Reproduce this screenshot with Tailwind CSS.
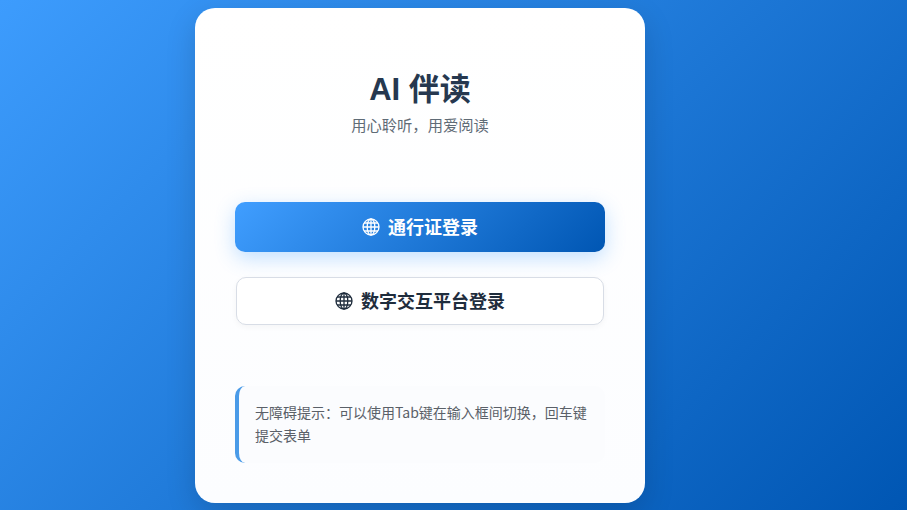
<!DOCTYPE html>
<html lang="zh-CN">
<head>
  <meta charset="UTF-8">
  <script src="https://cdn.jsdelivr.net/npm/@tailwindcss/browser@4"></script>
  <title>AI 伴读</title>
</head>
<body class="h-[510px] overflow-hidden flex items-center justify-center pr-[67px] bg-linear-[135deg,#3d9cfd,#0056b3] font-['Liberation_Sans','Noto_Sans_CJK_SC',sans-serif]">
  <main class="w-[450px] h-[495px] bg-linear-to-b from-white to-[#fcfdff] rounded-[20px] px-10 pt-[61px] shadow-[0_10px_30px_rgba(0,0,0,0.15)]">
    <!-- header -->
    <div class="text-center">
      <h1 class="text-[31px] leading-[42px] font-bold text-[#26384f]">AI 伴读</h1>
      <p class="mt-[4px] text-[15.3px] leading-[22px] text-[#5f6b76]">用心聆听&#xFF0C;用爱阅读</p>
    </div>

    <!-- login buttons -->
    <div class="mt-[65px] flex flex-col gap-[25px]">
      <button type="button" class="h-[50px] flex items-center justify-center gap-2 rounded-[10px] bg-linear-[135deg,#409eff,#0056b3] text-white text-[18px] font-bold shadow-[0_6px_20px_rgba(64,158,255,0.32)]">
        <svg class="w-[18px] h-[18px]" viewBox="0 0 18 18" fill="none" stroke="currentColor" stroke-width="1.3">
          <circle cx="9" cy="9" r="8"/>
          <ellipse cx="9" cy="9" rx="3.8" ry="8"/>
          <path d="M9 1v16M1 9h16M2 5h14M2 13h14"/>
        </svg>
        <span class="pt-1">通行证登录</span>
      </button>
      <button type="button" class="h-[48px] mx-px flex items-center justify-center gap-2 rounded-[10px] bg-white border border-[#d8dde6] text-[#1f2d3d] text-[18px] font-bold shadow-[0_2px_6px_rgba(0,0,0,0.04)]">
        <svg class="w-[18px] h-[18px]" viewBox="0 0 18 18" fill="none" stroke="currentColor" stroke-width="1.3">
          <circle cx="9" cy="9" r="8"/>
          <ellipse cx="9" cy="9" rx="3.8" ry="8"/>
          <path d="M9 1v16M1 9h16M2 5h14M2 13h14"/>
        </svg>
        <span class="pt-1">数字交互平台登录</span>
      </button>
    </div>

    <!-- accessibility tip -->
    <div class="mt-[61px] h-[77px] pl-4 pr-4 py-[15px] rounded-[10px] border-l-[4px] border-[#4a9be8] bg-[#fbfcfe] font-['Noto_Sans_CJK_SC',sans-serif] text-[14px] leading-[23px] text-[#5a6068]">
      无障碍提示&#xFF1A;可以使用Tab键在输入框间切换&#xFF0C;回车键提交表单
    </div>
  </main>
</body>
</html>
